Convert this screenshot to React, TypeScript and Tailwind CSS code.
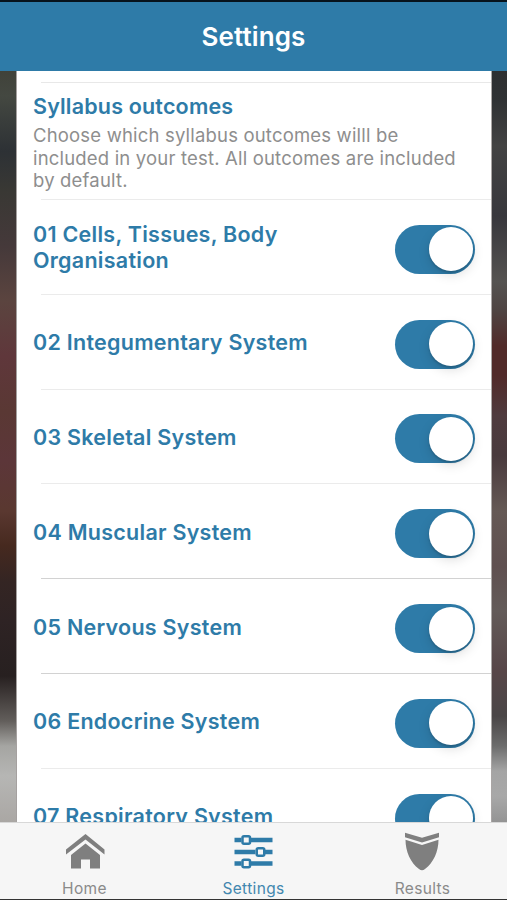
import type { ReactNode } from "react";

const OUTCOMES = [
  { id: 1, title: "01 Cells, Tissues, Body Organisation", line: "bg-[#ebebeb]" },
  { id: 2, title: "02 Integumentary System", line: "bg-[#ebebeb]" },
  { id: 3, title: "03 Skeletal System", line: "bg-[#ebebeb]" },
  { id: 4, title: "04 Muscular System", line: "bg-[#ebebeb]" },
  { id: 5, title: "05 Nervous System", line: "bg-[#d2d2d2]" },
  { id: 6, title: "06 Endocrine System", line: "bg-[#d2d2d2]" },
  { id: 7, title: "07 Respiratory System", line: "bg-[#ebebeb]" },
];

export default function App() {
  return (
    <div className="flex h-[900px] w-[507px] flex-col overflow-hidden border-t-2 border-b border-t-[#07131c] border-b-[#333] bg-[#f6f6f6] font-['Inter',sans-serif]">
      <header className="flex h-[69px] shrink-0 items-center justify-center bg-[#2e7ba8]">
        <h1 className="text-[26px] leading-[32px] font-semibold tracking-[0.1px] text-white">
          Settings
        </h1>
      </header>

      {/* The blurred backdrop only shows at the sides of the card */}
      <main className="flex min-h-0 flex-1 overflow-hidden">
        <div className="w-[17px] shrink-0 border-r border-[#a5a1a0] bg-[linear-gradient(180deg,#40423a_0px,#444841_25px,#2d3135_80px,#393834_120px,#45393a_175px,#5b443f_230px,#5f373b_285px,#5a3834_340px,#5c3639_390px,#5a3830_440px,#46291f_475px,#342523_510px,#2e2324_550px,#272020_605px,#625e5b_650px,#a5a5a2_675px,#b6b6b4_705px,#aaa7a4_751px)]" />
        <OutcomeList />
        <div className="flex-1 border-l border-[#aaa6a5] bg-[linear-gradient(180deg,#2d2f31_0px,#303234_30px,#434343_75px,#38373c_145px,#555351_210px,#4f4442_240px,#512a29_275px,#512a29_305px,#4f3b3e_345px,#493a3d_385px,#655955_440px,#5f5050_495px,#635b59_540px,#574648_600px,#4a4647_645px,#6c6c6c_675px,#a4a4a4_700px,#a8a8a8_725px,#949494_751px)]" />
      </main>

      <nav className="flex h-[77px] shrink-0 border-t border-[#d8d8d8] bg-[#f6f6f6]">
        <Tab label="Home">
          <HomeIcon />
        </Tab>
        <Tab label="Settings" active>
          <SlidersIcon />
        </Tab>
        <Tab label="Results">
          <ShieldIcon />
        </Tab>
      </nav>
    </div>
  );
}

function OutcomeList() {
  return (
    <section className="w-[474px] shrink-0 bg-white">
      <div className="ml-6 h-3 border-b border-[#e8e8e8]" />
      <div className="h-[116px] pt-[11px] pl-4">
        <h2 className="text-[21.5px] leading-[25px] font-semibold tracking-[0.18px] text-[#2e7ba8]">
          Syllabus outcomes
        </h2>
        <p className="mt-[5px] w-[440px] text-[18.5px] leading-[22.5px] tracking-[0.18px] text-[#8e8e8e]">
          Choose which syllabus outcomes willl be included in your test. All
          outcomes are included by default.
        </p>
      </div>
      {OUTCOMES.map((outcome) => (
        <div key={outcome.id} className="h-[94.8px]">
          <div className={`ml-6 h-px ${outcome.line}`} />
          <div className="flex h-[93.8px] items-center justify-between pt-[5px] pr-4 pl-4">
            <span className="w-[290px] pb-1 text-[21.5px] leading-[26px] font-semibold tracking-[0.26px] text-[#2e7ba8]">
              {outcome.title}
            </span>
            <Toggle />
          </div>
        </div>
      ))}
    </section>
  );
}

function Toggle() {
  return (
    <button
      role="switch"
      aria-checked="true"
      className="flex h-[49px] w-[80.5px] shrink-0 items-center justify-end rounded-full bg-[#2e7ba8] pr-[2px]"
    >
      <span className="size-11 rounded-full bg-white shadow-[0_4px_12px_rgba(0,0,0,0.13),0_2px_2px_rgba(0,0,0,0.15)]" />
    </button>
  );
}

function Tab({
  label,
  active,
  children,
}: {
  label: string;
  active?: boolean;
  children: ReactNode;
}) {
  return (
    <div
      className={
        active
          ? "flex flex-1 flex-col items-center pt-[9px] text-[#2e7ba8]"
          : "flex flex-1 flex-col items-center pt-[9px] text-[#7f7f7f]"
      }
    >
      {children}
      <span className="mt-[7px] text-[15.5px] leading-5 tracking-[0.35px] opacity-90">
        {label}
      </span>
    </div>
  );
}

function HomeIcon() {
  return (
    <svg width="40" height="40" viewBox="0 0 40 40" fill="currentColor">
      <path d="M20.500 2 39.500 17.500v5L20.500 7.500 1 22.500v-5Z" />
      <path d="M20.500 11.500 35 23v13.500H25V27.500h-9V36.500H6V23Z" />
    </svg>
  );
}

function SlidersIcon() {
  return (
    <svg width="40" height="40" viewBox="0 0 40 40" fill="none" stroke="currentColor">
      <path strokeWidth="4.500" d="M.5 8h7M17 8h21.500M.5 20h21M31 20h7.500M.5 31.500h7M17 31.500h21.500" />
      <g strokeWidth="2.500">
        <rect x="8.500" y="4.250" width="7.500" height="7.500" rx="1.500" />
        <rect x="22.750" y="16.250" width="7.500" height="7.500" rx="1.500" />
        <rect x="8.500" y="27.750" width="7.500" height="7.500" rx="1.500" />
      </g>
    </svg>
  );
}

function ShieldIcon() {
  return (
    <svg width="40" height="40" viewBox="0 0 40 40" fill="currentColor">
      <path d="M2 .7 19 5.700 36 .7V5.200L19 10.500 2 5.200Z" />
      <path d="M2.500 7.700 19 13 35.500 7.700C35.500 19 30.500 31 22 37Q19 39.500 16 37C7.500 31 2.500 19 2.500 7.700Z" />
    </svg>
  );
}
